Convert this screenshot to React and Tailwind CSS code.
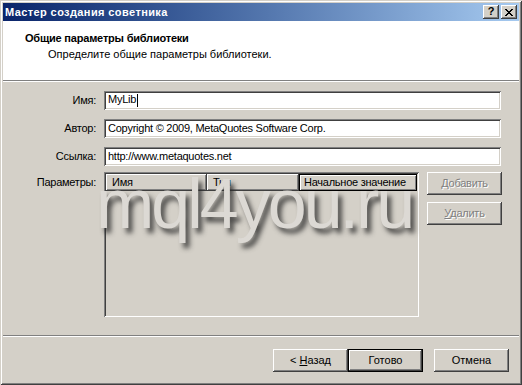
import React from "react";

const raised =
  "shadow-[inset_-1px_-1px_#404040,inset_1px_1px_#ffffff,inset_-2px_-2px_#808080,inset_2px_2px_#d4d0c8]";
const sunken =
  "shadow-[inset_1px_1px_#808080,inset_-1px_-1px_#ffffff,inset_2px_2px_#404040,inset_-2px_-2px_#d4d0c8]";

function Field({ label, value }) {
  return (
    <div className="flex items-center h-[19px]">
      <div className="w-[94px] text-right pr-[1px]">{label}</div>
      <div className={`ml-[7px] w-[397px] h-[19px] bg-white ${sunken} flex items-center pl-[4px] whitespace-nowrap`}>
        {value}
      </div>
    </div>
  );
}

function Btn({ children, className = "", disabled = false }) {
  return (
    <div
      className={`w-[75px] h-[23px] bg-[#d4d0c8] ${raised} flex items-center justify-center ${
        disabled ? "text-[#808080] [text-shadow:1px_1px_0_#ffffff]" : "text-black"
      } ${className}`}
    >
      {children}
    </div>
  );
}

export default function App() {
  return (
    <div
      className="relative w-[522px] h-[385px] bg-[#d4d0c8] p-[3px] overflow-hidden text-[11px] leading-none text-black shadow-[inset_1px_1px_#d4d0c8,inset_-1px_-1px_#404040,inset_2px_2px_#ffffff,inset_-2px_-2px_#808080]"
      style={{ fontFamily: '"Liberation Sans", Arial, sans-serif' }}
    >
      <div className="flex flex-col w-[516px] h-[379px]">
        {/* Title bar */}
        <div className="h-[18px] bg-gradient-to-r from-[#0a246a] to-[#a6caf0] flex items-center pl-[2px] pr-[2px]">
          <div className="text-white font-bold text-[11px] tracking-[0.4px] flex-1 whitespace-nowrap">
            Мастер создания советника
          </div>
          <div className={`w-[16px] h-[14px] bg-[#d4d0c8] ${raised} flex items-center justify-center font-bold text-[11px] pb-[1px]`}>
            ?
          </div>
          <div className={`ml-[2px] w-[16px] h-[14px] bg-[#d4d0c8] ${raised} flex items-center justify-center`}>
            <svg width="8" height="7" viewBox="0 0 8 7" shapeRendering="crispEdges">
              <path d="M0 0h2v1h-2zM6 0h2v1h-2zM1 1h2v1h-2zM5 1h2v1h-2zM2 2h4v1h-4zM3 3h2v1h-2zM2 4h4v1h-4zM1 5h2v1h-2zM5 5h2v1h-2zM0 6h2v1h-2zM6 6h2v1h-2z" fill="#000" />
            </svg>
          </div>
        </div>

        {/* Header */}
        <div className="h-[59px] bg-white pt-[12px] pl-[22px]">
          <div className="font-bold text-[11px] tracking-[-0.2px] whitespace-nowrap">Общие параметры библиотеки</div>
          <div className="mt-[5px] pl-[23px] text-[11px] whitespace-nowrap">Определите общие параметры библиотеки.</div>
        </div>
        <div className="h-[1px] bg-[#808080]" />
        <div className="h-[1px] bg-white" />

        {/* Body */}
        <div className="flex flex-col pt-[9px] text-[11px] tracking-[-0.25px]">
          <div className="flex flex-col gap-[9px]">
            <Field label="Имя:" value={<span>MyLib<span className="inline-block w-[1px] h-[13px] bg-black align-middle ml-[1px]" /></span>} />
            <Field label="Автор:" value="Copyright © 2009, MetaQuotes Software Corp." />
            <Field label="Ссылка:" value="http://www.metaquotes.net" />
          </div>
          <div className="flex mt-[6px]">
            <div className="w-[94px] text-right pr-[1px] pt-[5px]">Параметры:</div>
            <div className={`ml-[7px] w-[315px] h-[145px] bg-[#d4d0c8] ${sunken} p-[2px]`}>
              <div className="flex h-[17px] whitespace-nowrap">
                <div className={`w-[101px] h-[17px] ${raised} flex items-center pl-[6px]`}>Имя</div>
                <div className={`w-[92px] h-[17px] ${raised} flex items-center pl-[6px]`}>Тип</div>
                <div className="w-[118px] h-[17px] border border-black flex items-center pl-[4px] shadow-[inset_1px_1px_#ffffff,inset_-1px_-1px_#808080]">
                  Начальное значение
                </div>
              </div>
            </div>
            <div className="ml-[8px] flex flex-col gap-[7px]">
              <Btn disabled>
                <span><span className="underline">Д</span>обавить</span>
              </Btn>
              <Btn disabled>
                <span><span className="underline">У</span>далить</span>
              </Btn>
            </div>
          </div>
        </div>

        <div className="mt-[18px] h-[1px] bg-[#808080]" />
        <div className="h-[1px] bg-white" />

        <div className="flex justify-end pr-[10px] mt-[12px] text-[11px]">
          <Btn>
            <span>&lt; <span className="underline">Н</span>азад</span>
          </Btn>
          <div className="w-[75px] h-[23px] border border-black bg-[#d4d0c8] shadow-[inset_-1px_-1px_#404040,inset_1px_1px_#ffffff,inset_-2px_-2px_#808080] flex items-center justify-center">
            Готово
          </div>
          <Btn className="ml-[11px]">Отмена</Btn>
        </div>
      </div>

      {/* Watermark overlay */}
      <div
        className="absolute left-[96px] top-[169px] text-[70px] leading-none tracking-[-3px] text-[#dcd9d4] [text-shadow:4px_5px_5px_rgba(40,40,40,0.8)] pointer-events-none whitespace-nowrap"
        style={{ fontFamily: '"Liberation Sans", Arial, sans-serif' }}
      >
        mql4you.ru
      </div>
    </div>
  );
}
